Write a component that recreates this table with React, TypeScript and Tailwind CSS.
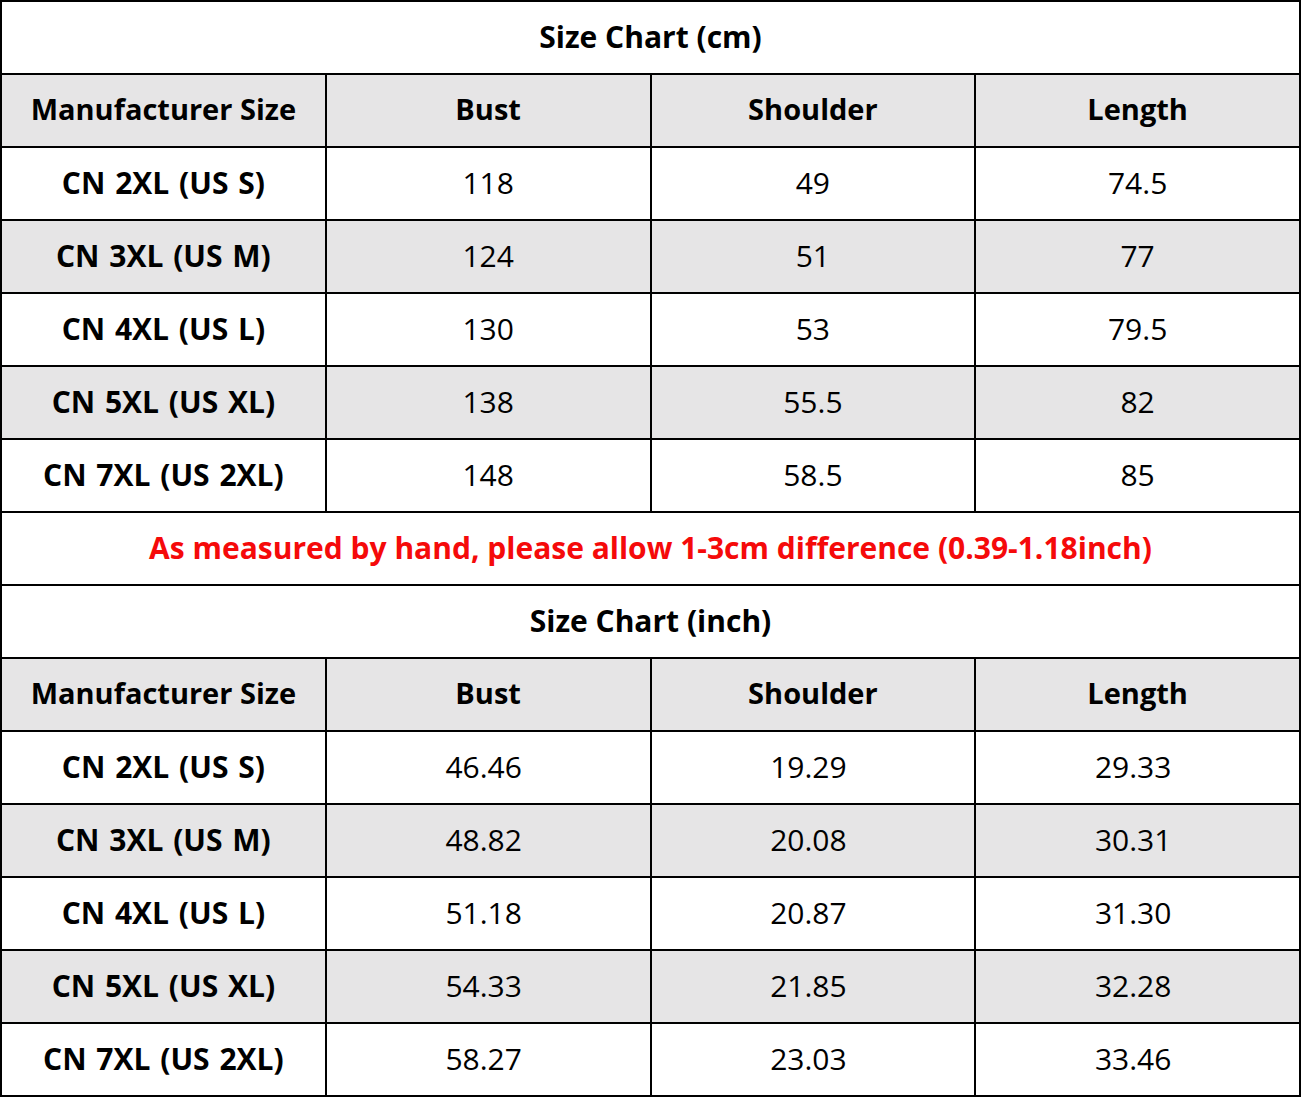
const headers = ['Manufacturer Size', 'Bust', 'Shoulder', 'Length'];

const cmRows = [
  ['CN 2XL (US S)', '118', '49', '74.5'],
  ['CN 3XL (US M)', '124', '51', '77'],
  ['CN 4XL (US L)', '130', '53', '79.5'],
  ['CN 5XL (US XL)', '138', '55.5', '82'],
  ['CN 7XL (US 2XL)', '148', '58.5', '85'],
];

const inchRows = [
  ['CN 2XL (US S)', '46.46', '19.29', '29.33'],
  ['CN 3XL (US M)', '48.82', '20.08', '30.31'],
  ['CN 4XL (US L)', '51.18', '20.87', '31.30'],
  ['CN 5XL (US XL)', '54.33', '21.85', '32.28'],
  ['CN 7XL (US 2XL)', '58.27', '23.03', '33.46'],
];

function TitleRow({ children, red }: { children: React.ReactNode; red?: boolean }) {
  return (
    <div
      className={`h-[73px] pb-[3px] border-r-2 border-b-2 border-black flex items-center justify-center font-bold text-[30px] ${
        red ? 'text-[#f50a0a]' : 'text-black'
      }`}
    >
      {children}
    </div>
  );
}

function Section({ title, rows, shift }: { title: string; rows: string[][]; shift?: boolean }) {
  return (
    <>
      <TitleRow>{title}</TitleRow>
      <div className="grid grid-cols-4 bg-[#e6e5e6]">
        {headers.map((h) => (
          <div
            key={h}
            className="h-[73px] pb-[3px] border-r-2 border-b-2 border-black flex items-center justify-center font-bold text-[29px]"
          >
            {h}
          </div>
        ))}
      </div>
      {rows.map((row, i) => (
        <div key={i} className={`grid grid-cols-4 ${i % 2 === 1 ? 'bg-[#e6e5e6]' : 'bg-white'}`}>
          {row.map((cell, j) => (
            <div
              key={j}
              className={`h-[73px] pb-[3px] border-r-2 border-b-2 border-black flex items-center justify-center text-[30px] ${
                j === 0 ? 'font-bold [word-spacing:2px]' : shift ? 'font-normal pr-[9px]' : 'font-normal'
              }`}
            >
              {cell}
            </div>
          ))}
        </div>
      ))}
    </>
  );
}

export default function App() {
  return (
    <div className="w-[1302px] h-[1097px] bg-white overflow-hidden">
      <div
        className="w-[1301px] border-l-2 border-t-2 border-black text-black"
        style={{ fontFamily: '"Open Sans", "Noto Sans", sans-serif' }}
      >
        <Section title="Size Chart (cm)" rows={cmRows} />
        <TitleRow red>As measured by hand, please allow 1-3cm difference (0.39-1.18inch)</TitleRow>
        <Section title="Size Chart (inch)" rows={inchRows} shift />
      </div>
    </div>
  );
}
